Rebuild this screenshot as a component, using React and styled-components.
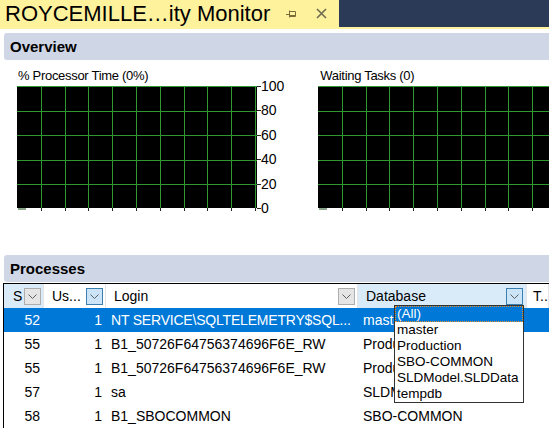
import React from 'react';
import styled, { createGlobalStyle } from 'styled-components';

const GlobalStyle = createGlobalStyle`
  html, body {
    margin: 0;
    padding: 0;
    background: #fff;
  }
  body {
    font-family: 'Liberation Sans', Arial, sans-serif;
    color: #000;
  }
`;

const Window = styled.div`
  width: 549px;
  height: 429px;
  overflow: hidden;
  background: #fff;
  display: flex;
  flex-direction: column;
`;

const TitleBar = styled.div`
  height: 27px;
  display: flex;
  background: #2b3a57;
  flex-shrink: 0;
`;

const Tab = styled.div`
  width: 339px;
  box-sizing: border-box;
  padding-left: 5px;
  background: #fff29d;
  display: flex;
  align-items: center;
`;

const TabTitle = styled.span`
  font-size: 22px;
  white-space: nowrap;
  line-height: 27px;
`;

const TabIcon = styled.span`
  display: flex;
  align-items: center;
  margin-left: ${(p) => p.gap}px;
`;

const Strip = styled.div`
  height: 2px;
  background: #fff29d;
  flex-shrink: 0;
`;

const Body = styled.div`
  padding: 4px 0 0 3px;
  display: flex;
  flex-direction: column;
`;

const SectionHeader = styled.div`
  margin-left: 1px;
  height: 27px;
  padding-left: 6px;
  display: flex;
  align-items: center;
  background: #cfd6e5;
  border-radius: 3px 0 0 3px;
  font-size: 15px;
  font-weight: bold;
`;

const Charts = styled.div`
  display: flex;
  gap: 34px;
  margin: 9px 0 0 14px;
  height: 186px;
`;

const ChartBlock = styled.div`
  display: flex;
  flex-direction: column;
  flex-shrink: 0;
`;

const ChartLabel = styled.div`
  font-size: 13px;
  line-height: 14px;
  height: 14px;
  margin: 0 0 3px ${(p) => p.indent}px;
  letter-spacing: -0.3px;
  white-space: nowrap;
`;

const ChartBody = styled.div`
  display: flex;
`;

const Axis = styled.div`
  margin: -7px 0 0 -1px;
  height: 136px;
  display: flex;
  flex-direction: column;
  justify-content: space-between;
`;

const AxisLabel = styled.span`
  font-size: 14px;
  line-height: 14px;
`;

const Table = styled.div`
  position: relative;
  margin-top: 1px;
  border-top: 1px solid #000;
  border-left: 1px solid #000;
`;

const Row = styled.div`
  display: grid;
  grid-template-columns: 40px 62px 252px 169px 1fr;
  height: 24px;
  background: ${(p) => (p.selected ? '#0078d7' : '#fff')};
  color: ${(p) => (p.selected ? '#fff' : '#000')};
  font-size: 14px;
`;

const HeadCell = styled.div`
  display: flex;
  align-items: center;
  justify-content: space-between;
  padding: 0 ${(p) => p.pr ?? 2}px 0 ${(p) => p.pl ?? 8}px;
  background: ${(p) => (p.hot ? '#d9ebf9' : '#fff')};
  border-right: 1px solid #e5e5e5;
  font-size: 14px;
  white-space: nowrap;
  overflow: hidden;
`;

const FilterButton = styled.span`
  width: 15px;
  height: 15px;
  flex-shrink: 0;
  display: flex;
  align-items: center;
  justify-content: center;
  border: 1px solid ${(p) => (p.active ? '#3c7fb1' : '#adadad')};
  background: ${(p) => (p.active ? '#cce4f7' : '#e5e5e5')};
`;

const Cell = styled.div`
  display: flex;
  align-items: center;
  justify-content: ${(p) => (p.right ? 'flex-end' : 'flex-start')};
  padding: ${(p) => (p.right ? '0 4px 0 0' : '0 0 0 5px')};
  white-space: nowrap;
  overflow: hidden;
`;

const CellText = styled.span`
  overflow: hidden;
  text-overflow: ellipsis;
  letter-spacing: ${(p) => (p.tight ? '-0.2px' : 'normal')};
`;

const Popup = styled.div`
  position: absolute;
  left: 390px;
  top: 21px;
  width: 128px;
  border: 1px solid #333;
  background: #fff;
  display: flex;
  flex-direction: column;
  z-index: 2;
`;

const PopupItem = styled.div`
  height: 16px;
  line-height: 16px;
  padding-left: 2px;
  font-size: 13.5px;
  white-space: nowrap;
  box-sizing: border-box;
  background: ${(p) => (p.selected ? '#0078d7' : '#fff')};
  color: ${(p) => (p.selected ? '#fff' : '#000')};
  outline: ${(p) => (p.selected ? '1px dotted #e8902a' : 'none')};
  outline-offset: -1px;
`;

const Chevron = () => (
  <svg width="9" height="5" viewBox="0 0 9 5">
    <path d="M0.5 0.5 L4.5 4.5 L8.5 0.5" fill="none" stroke="#606060" strokeWidth="1" />
  </svg>
);

const PinIcon = () => (
  <svg width="11" height="8" viewBox="0 0 11 8">
    <g fill="none" stroke="#7a6d3a" strokeWidth="1">
      <path d="M0 4.5 H3.5" />
      <path d="M3.5 0.5 V7.5" />
      <path d="M3.5 1.5 H9.5 V6.5 H3.5" />
      <path d="M3.5 5.5 H9.5" />
    </g>
  </svg>
);

const CloseIcon = () => (
  <svg width="11" height="11" viewBox="0 0 11 11">
    <path d="M1 1 L10 10 M10 1 L1 10" stroke="#6f6a50" strokeWidth="1.6" />
  </svg>
);

const PLOT_W = 240;
const PLOT_H = 122;

// black plot with green grid, ticks below and on the right
const Plot = ({ ticks }) => {
  const cols = Array.from({ length: 10 }, (_, i) => Math.round((i + 1) * 23.8) + 0.5);
  const rows = Array.from({ length: 5 }, (_, i) => Math.round(i * 24.5) + 0.5);
  const levels = Array.from({ length: 6 }, (_, i) => Math.round(i * 24.4) + 0.5);
  return (
    <svg width={PLOT_W + 5} height={PLOT_H + 4} style={{ display: 'block', flexShrink: 0 }}>
      <rect x="0" y="0" width={PLOT_W} height={PLOT_H} fill="#000" />
      {rows.map((y) => (
        <line key={'h' + y} x1="0" x2={PLOT_W} y1={y} y2={y} stroke="#2f9a2f" />
      ))}
      {cols.map((x) => (
        <line key={'v' + x} x1={x} x2={x} y1="0" y2={PLOT_H} stroke="#2f9a2f" />
      ))}
      {cols.map((x) => (
        <line key={'t' + x} x1={x} x2={x} y1={PLOT_H} y2={PLOT_H + 3} stroke="#222" />
      ))}
      <rect x="1" y={PLOT_H} width="8" height="2" fill="#8aa68a" />
      {ticks &&
        levels.map((y) => (
          <line key={'a' + y} x1={PLOT_W} x2={PLOT_W + 4} y1={y} y2={y} stroke="#222" />
        ))}
    </svg>
  );
};

const processes = [
  { id: '52', users: '1', login: 'NT SERVICE\\SQLTELEMETRY$SQL...', db: 'master', selected: true },
  { id: '55', users: '1', login: 'B1_50726F64756374696F6E_RW', db: 'Production' },
  { id: '55', users: '1', login: 'B1_50726F64756374696F6E_RW', db: 'Production' },
  { id: '57', users: '1', login: 'sa', db: 'SLDModel.SLDData' },
  { id: '58', users: '1', login: 'B1_SBOCOMMON', db: 'SBO-COMMON' },
];

const databases = ['(All)', 'master', 'Production', 'SBO-COMMON', 'SLDModel.SLDData', 'tempdb'];

const App = () => {
  return (
    <Window>
      <GlobalStyle />
      <TitleBar>
        <Tab>
          <TabTitle>ROYCEMILLE…ity Monitor</TabTitle>
          <TabIcon gap={16}>
            <PinIcon />
          </TabIcon>
          <TabIcon gap={19}>
            <CloseIcon />
          </TabIcon>
        </Tab>
      </TitleBar>
      <Strip />

      <Body>
        <SectionHeader>Overview</SectionHeader>
        <Charts>
          <ChartBlock>
            <ChartLabel indent={1}>% Processor Time (0%)</ChartLabel>
            <ChartBody>
              <Plot ticks />
              <Axis>
                {['100', '80', '60', '40', '20', '0'].map((v) => (
                  <AxisLabel key={v}>{v}</AxisLabel>
                ))}
              </Axis>
            </ChartBody>
          </ChartBlock>
          <ChartBlock>
            <ChartLabel indent={2}>Waiting Tasks (0)</ChartLabel>
            <ChartBody>
              <Plot ticks />
            </ChartBody>
          </ChartBlock>
        </Charts>

        <SectionHeader>Processes</SectionHeader>
        <Table>
          <Row>
            <HeadCell hot pl={9} pr={2}>
              S
              <FilterButton>
                <Chevron />
              </FilterButton>
            </HeadCell>
            <HeadCell>
              Us...
              <FilterButton active>
                <Chevron />
              </FilterButton>
            </HeadCell>
            <HeadCell>
              Login
              <FilterButton>
                <Chevron />
              </FilterButton>
            </HeadCell>
            <HeadCell hot pr={3}>
              Database
              <FilterButton active>
                <Chevron />
              </FilterButton>
            </HeadCell>
            <HeadCell pl={6}>T...</HeadCell>
          </Row>
          {processes.map((p, i) => (
            <Row key={i} selected={p.selected}>
              <Cell right>{p.id}</Cell>
              <Cell right>{p.users}</Cell>
              <Cell>
                <CellText tight={p.selected}>{p.login}</CellText>
              </Cell>
              <Cell>
                <CellText>{p.db}</CellText>
              </Cell>
              <Cell />
            </Row>
          ))}
          <Popup>
            {databases.map((d, i) => (
              <PopupItem key={d} selected={i === 0}>
                {d}
              </PopupItem>
            ))}
          </Popup>
        </Table>
      </Body>
    </Window>
  );
};

export default App;
